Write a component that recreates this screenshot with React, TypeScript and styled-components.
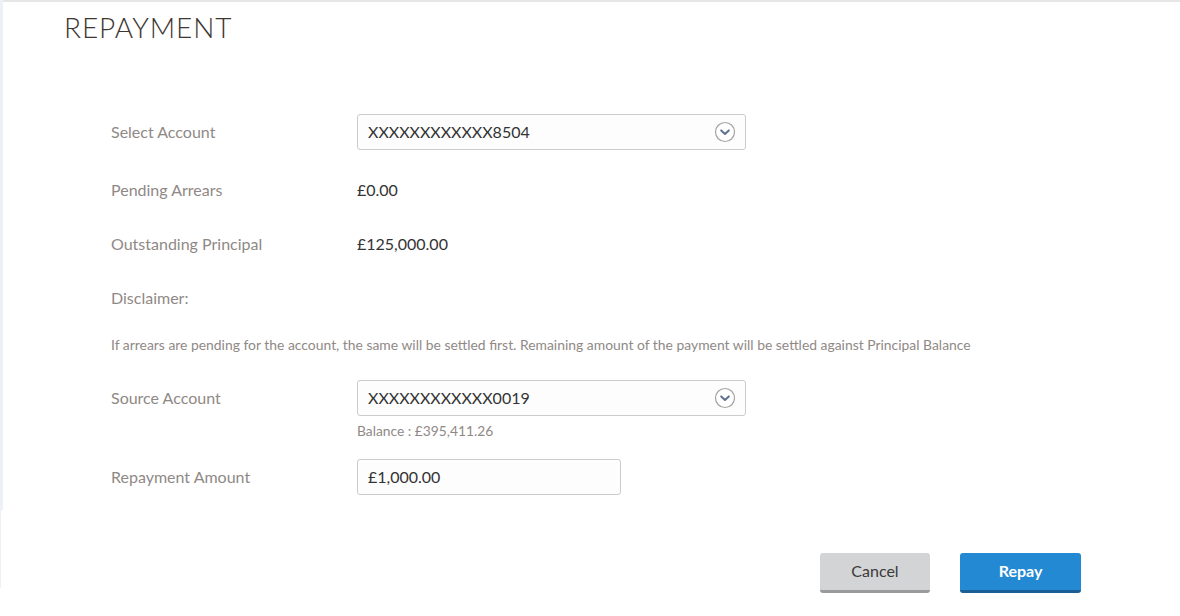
import React from 'react';
import styled, { createGlobalStyle } from 'styled-components';

const GlobalStyle = createGlobalStyle`
    html, body {
        margin: 0;
        padding: 0;
        background: #ffffff;
        font-family: Lato, "Open Sans", sans-serif;
    }
`;

type Field = {
    label: string;
    value: string;
    top: number;
};

const summary: Field[] = [
    { label: 'Pending Arrears', value: '£0.00', top: 22 },
    { label: 'Outstanding Principal', value: '£125,000.00', top: 18 },
];

const ChevronCircle = () => (
    <svg width="22" height="22" viewBox="0 0 22 22">
        <circle cx="11" cy="11" r="9.5" fill="#ffffff" stroke="#a3a3a3" strokeWidth="1.2" />
        <path d="M7.2 9.4 L11 13 L14.8 9.4" fill="none" stroke="#5f7391" strokeWidth="2" strokeLinecap="round" strokeLinejoin="round" />
    </svg>
);

const Select = ({ value }: { value: string }) => (
    <SelectBox>
        <span>{value}</span>
        <ChevronCircle />
    </SelectBox>
);

export default function App() {
    return (
        <>
            <GlobalStyle />
            <Page>
                <SideStrip />
                <Main>
                    <Title>REPAYMENT</Title>
                    <Form>
                        <Row top={0}>
                            <Label>Select Account</Label>
                            <Select value="XXXXXXXXXXXX8504" />
                        </Row>
                        {summary.map((f) => (
                            <Row key={f.label} top={f.top}>
                                <Label>{f.label}</Label>
                                <Value>{f.value}</Value>
                            </Row>
                        ))}
                        <Row top={18}>
                            <Label>Disclaimer:</Label>
                        </Row>
                        <Note>
                            If arrears are pending for the account, the same will be settled first. Remaining amount of the payment will be settled against Principal Balance
                        </Note>
                        <Row top={25}>
                            <Label>Source Account</Label>
                            <Select value="XXXXXXXXXXXX0019" />
                        </Row>
                        <Balance>Balance : £395,411.26</Balance>
                        <Row top={19}>
                            <Label>Repayment Amount</Label>
                            <AmountInput>£1,000.00</AmountInput>
                        </Row>
                    </Form>
                    <Actions>
                        <Button variant="secondary">Cancel</Button>
                        <Button variant="primary">Repay</Button>
                    </Actions>
                </Main>
            </Page>
        </>
    );
}

const Page = styled.div`
    display: flex;
    width: 1180px;
    height: 616px;
    overflow: hidden;
`;

const SideStrip = styled.div`
    position: relative;
    width: 3px;
    height: 510px;
    background: #eef0f7;
    flex-shrink: 0;

    &::after {
        content: '';
        position: absolute;
        left: 0;
        top: 510px;
        width: 1px;
        height: 78px;
        background: #eef0f7;
    }
`;

const Main = styled.div`
    flex: 1;
    border-top: 2px solid #e6e6e6;
    display: flex;
    flex-direction: column;
`;

const Title = styled.h1`
    margin: 10px 0 0 61px;
    font-family: Lato, sans-serif;
    font-weight: 300;
    font-size: 28px;
    line-height: 30px;
    letter-spacing: 0.9px;
    color: #3e3631;
`;

const Form = styled.div`
    display: flex;
    flex-direction: column;
    padding-left: 108px;
    margin-top: 72px;
`;

const Row = styled.div<{ top: number }>`
    display: flex;
    align-items: center;
    height: 36px;
    margin-top: ${(p) => p.top}px;
`;

const Label = styled.div`
    width: 246px;
    flex-shrink: 0;
    font-size: 16px;
    line-height: 20px;
    padding-bottom: 1px;
    color: #8f8986;
`;

const Value = styled.div`
    font-size: 16px;
    line-height: 20px;
    padding-bottom: 1px;
    color: #333333;
`;

const SelectBox = styled.div`
    box-sizing: border-box;
    width: 389px;
    height: 36px;
    border: 1px solid #cccccc;
    border-radius: 3px;
    background: #fdfdfd;
    display: flex;
    align-items: center;
    justify-content: space-between;
    padding: 0 9px 1px 10px;
    font-size: 16px;
    color: #333333;
`;

const AmountInput = styled.div`
    box-sizing: border-box;
    width: 264px;
    height: 36px;
    border: 1px solid #cccccc;
    border-radius: 3px;
    background: #fdfdfd;
    display: flex;
    align-items: center;
    padding: 0 10px 1px;
    font-size: 16px;
    color: #333333;
`;

const Note = styled.div`
    margin-top: 19px;
    height: 20px;
    line-height: 20px;
    font-size: 13.9px;
    color: #8f8986;
`;

const Balance = styled.div`
    margin: 6px 0 0 246px;
    height: 18px;
    line-height: 18px;
    font-size: 13.8px;
    color: #8f8986;
`;

const Actions = styled.div`
    display: flex;
    justify-content: flex-end;
    gap: 30px;
    margin-top: 58px;
    padding-right: 99px;
`;

const Button = styled.div<{ variant: 'primary' | 'secondary' }>`
    box-sizing: border-box;
    height: 40px;
    width: ${(p) => (p.variant === 'primary' ? 121 : 110)}px;
    border-radius: 3px;
    display: flex;
    align-items: center;
    justify-content: center;
    font-size: 16px;
    padding-bottom: 2px;
    background: ${(p) => (p.variant === 'primary' ? '#2489d3' : '#d3d4d5')};
    color: ${(p) => (p.variant === 'primary' ? '#ffffff' : '#3a3a3a')};
    font-weight: ${(p) => (p.variant === 'primary' ? 700 : 400)};
    border-bottom: 3px solid ${(p) => (p.variant === 'primary' ? '#1c5f96' : '#9b9b9b')};
`;
